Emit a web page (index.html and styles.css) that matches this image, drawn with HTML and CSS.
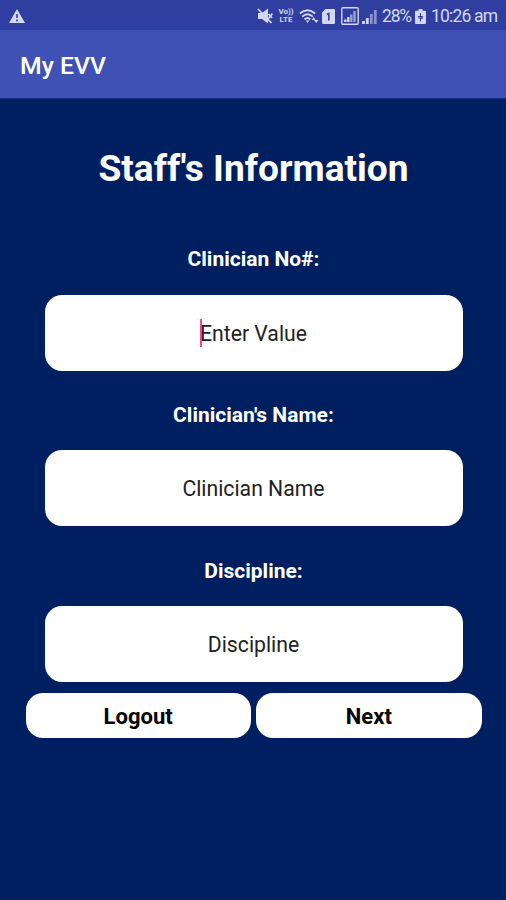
FILE: index.html
```html
<!DOCTYPE html>
<html lang="en">

<head>
    <meta charset="UTF-8">
    <title>My EVV</title>
    <link rel="stylesheet" href="styles.css">
</head>

<body>
    <div class="status-bar">
        <svg class="warning" width="16" height="14" viewBox="0 0 16 14">
            <path d="M8 0 L16 14 H0 Z" fill="currentColor"/>
            <path d="M8 5v4M8 10.5v2" stroke="#303f9f" stroke-width="1.6"/>
        </svg>
        <!-- muted speaker -->
        <svg class="mute" width="16" height="16" viewBox="0 0 16 16">
            <path d="M1 5h4l6-4.5v15l-6-4.5H1z" fill="currentColor"/>
            <path d="M1 1l13.5 14M11.5 6l3.5 4M15.5 5.5l-4 5" stroke="currentColor" stroke-width="1.8"/>
        </svg>
        <div class="volte"><span>Vo))</span><span>LTE</span></div>
        <!-- wifi with data arrows -->
        <svg class="wifi" width="20" height="15" viewBox="0 0 20 15">
            <g fill="none" stroke="currentColor" stroke-width="1.9">
                <path d="M.8 4.5Q8.5-2.2 16.2 4.5"/>
                <path d="M3.2 7.6Q8.5 2.7 13.8 7.6"/>
                <path d="M5.6 10.5Q8.5 7.7 11.4 10.5"/>
            </g>
            <path d="M6.8 11.5h3.6l-1.8 2.5zM12.8 11l1.9-3 1.9 3zM15 11h4.5l-2.2 3z" fill="currentColor"/>
        </svg>
        <!-- sim 1 -->
        <svg class="sim" width="13" height="15" viewBox="0 0 13 15">
            <path d="M3.5 0H12q1 0 1 1v13q0 1-1 1H1q-1 0-1-1V3.5z" fill="currentColor"/>
            <path d="M4.8 5.5L6.8 4.5V11.5" fill="none" stroke="#303f9f" stroke-width="1.6"/>
        </svg>
        <svg class="signal-box" width="18" height="18" viewBox="0 0 18 18">
            <rect x=".8" y=".8" width="16.4" height="16.4" rx="1" fill="none" stroke="currentColor" stroke-width="1.4"/>
            <path d="M4.3 15v-2.5M7.3 15v-5" stroke="currentColor" stroke-width="2.4"/>
            <path d="M10.3 15V7.5M13.5 15V4" stroke="currentColor" stroke-width="2.4" opacity=".65"/>
        </svg>
        <svg class="signal" width="15" height="15" viewBox="0 0 15 15">
            <path d="M1.5 15v-3M5.3 15V9" stroke="currentColor" stroke-width="2.8"/>
            <path d="M9.3 15V5M13.3 15V1" stroke="currentColor" stroke-width="2.8" opacity=".55"/>
        </svg>
        <span class="percent">28%</span>
        <!-- charging battery -->
        <svg class="battery" width="11" height="15" viewBox="0 0 11 15">
            <path d="M3.5 0h4v1.8H10q1 0 1 1V14q0 1-1 1H1q-1 0-1-1V2.8q0-1 1-1h2.5z" fill="currentColor"/>
            <path d="M5.5 4v3.5H3.5M5.5 12.5V9h2M3 7.5h5M3 9h5" fill="none" stroke="#303f9f" stroke-width="1"/>
        </svg>
        <span class="time">10:26 am</span>
    </div>

    <header class="app-bar">My EVV</header>

    <form>
        <h1>Staff's Information</h1>
        <div class="form-group">
            <label for="clinician_no">Clinician No#:</label>
            <div class="field">
                <input type="text" id="clinician_no" placeholder="Enter Value">
                <span class="caret"></span>
            </div>
        </div>
        <div class="form-group">
            <label for="clinician_name">Clinician's Name:</label>
            <input type="text" id="clinician_name" placeholder="Clinician Name">
        </div>
        <div class="form-group">
            <label for="discipline">Discipline:</label>
            <input type="text" id="discipline" placeholder="Discipline">
        </div>
        <div class="buttons">
            <button type="button">Logout</button>
            <button type="button">Next</button>
        </div>
    </form>
</body>

</html>
```

FILE: styles.css
```css
* {
    box-sizing: border-box;
}

body {
    margin: 0;
    height: 900px;
    background: #001f60;
    color: #fff;
    font-family: Roboto, sans-serif;
    overflow: hidden;
}

/* status bar */
.status-bar {
    display: flex;
    align-items: center;
    height: 30px;
    padding: 2px 9px 0 9px;
    background: #303f9f;
    color: #d3d7f0;
    font-size: 17.5px;
    white-space: nowrap;
}

.status-bar svg {
    flex: none;
}

.mute {
    margin-left: auto;
}

.volte {
    display: flex;
    flex-direction: column;
    align-items: center;
    width: 16px;
    margin-left: 5px;
    font-size: 8px;
    font-weight: 700;
    line-height: 8.5px;
}

.wifi {
    margin-left: 5px;
}

.sim {
    margin-left: 3px;
}

.signal-box {
    margin-left: 6px;
}

.signal {
    margin-left: 3px;
}

.percent {
    width: 29px;
    margin-left: 5px;
    letter-spacing: -1.2px;
}

.battery {
    margin-left: 4px;
}

.time {
    width: 66px;
    margin-left: 5px;
    letter-spacing: -0.8px;
}

.app-bar {
    height: 69px;
    padding-left: 20px;
    border-bottom: 1px solid #1f3080;
    background: #3f51b5;
    font-size: 24.8px;
    font-weight: 500;
    line-height: 72px;
}

/* form */
h1 {
    margin: 0;
    padding: 46px 0 0 1px;
    font-size: 37.1px;
    font-weight: 700;
    line-height: 48px;
    text-align: center;
}

.form-group {
    display: flex;
    flex-direction: column;
    height: 155.7px;
    padding: 0 43.5px 0 44.5px;
}

h1 + .form-group {
    margin-top: 22.3px;
}

label {
    padding-top: 31px;
    height: 79.5px;
    font-size: 21px;
    font-weight: 700;
    line-height: 26px;
    text-align: center;
}

.field {
    position: relative;
}

input {
    display: block;
    width: 100%;
    height: 76px;
    padding: 1px 0 0;
    border: none;
    border-radius: 17px;
    background: #fff;
    font-family: inherit;
    font-size: 21.2px;
    text-align: center;
}

input::placeholder {
    color: #222;
}

/* text cursor in the focused field */
.caret {
    position: absolute;
    top: 24px;
    left: 155px;
    width: 2px;
    height: 28px;
    background: #ff4081;
}

.buttons {
    display: flex;
    gap: 5.5px;
    padding: 11px 24.5px 0 25.5px;
}

button {
    flex: 1;
    height: 44.5px;
    padding: 2px 0 0;
    border: none;
    border-radius: 17px;
    background: #fff;
    color: #000;
    font-family: inherit;
    font-size: 22px;
    font-weight: 700;
}
```
